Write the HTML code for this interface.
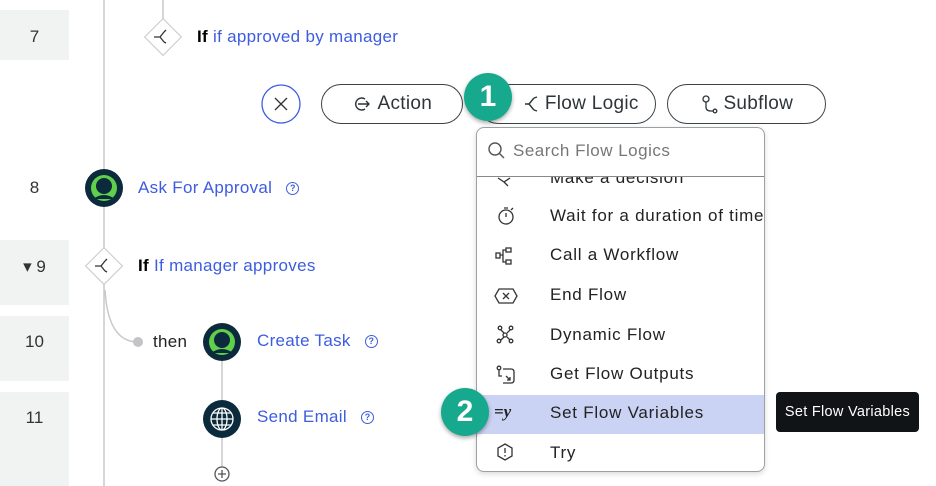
<!DOCTYPE html>
<html><head><style>
body{margin:0;width:936px;height:486px;overflow:hidden;background:#fff;font-family:"Liberation Sans",sans-serif;position:relative}
.a{position:absolute}
.num{position:absolute;left:0;width:69px;background:#f1f2f2;color:#333;font-size:17px;text-align:center}
.lk{color:#3d5ce0}
.t{position:absolute;font-size:17px;white-space:nowrap;letter-spacing:0.3px}
.pill{position:absolute;top:84px;border:1.5px solid #3a4245;border-radius:20px;font-size:19px;color:#2e3538;display:flex;align-items:center;justify-content:center;box-sizing:border-box;height:40px;letter-spacing:0.3px}
.it{position:absolute;left:550px;font-size:17px;color:#222;white-space:nowrap;letter-spacing:0.75px}
.ic{position:absolute;left:494px}
.badge{position:absolute;width:48px;height:48px;border-radius:50%;background:#17a98d;color:#fff;font-size:30px;font-weight:bold;text-align:center;line-height:48px;box-shadow:0 2px 4px rgba(0,0,0,.35)}
.help{display:inline-block;width:11px;height:11px;border:1.5px solid #3d5ce0;border-radius:50%;font-size:9px;line-height:11px;text-align:center;color:#3d5ce0;margin-left:14px;vertical-align:2px;font-weight:bold;letter-spacing:0}
</style></head><body>
<div class="num" style="top:10px;height:50px;line-height:54px">7</div>
<div class="a" style="left:0;top:163px;width:69px;line-height:50px;text-align:center;font-size:17px;color:#333">8</div>
<div class="num" style="top:240px;height:65px;line-height:54px">&#9662; 9</div>
<div class="num" style="top:316px;height:65px;line-height:52px">10</div>
<div class="num" style="top:392px;height:94px;line-height:52px">11</div>

<svg class="a" style="left:0;top:0" width="936" height="486">
<line x1="104" y1="0" x2="104" y2="486" stroke="#c9c9c9" stroke-width="1.5"/>
<line x1="163" y1="0" x2="163" y2="20" stroke="#c9c9c9" stroke-width="1.5"/>
<path d="M105 290 Q108 342 138 342" fill="none" stroke="#c9c9c9" stroke-width="1.5"/>
<circle cx="138" cy="342" r="5" fill="#c4c4c8"/>
<line x1="222" y1="342" x2="222" y2="470" stroke="#c9c9c9" stroke-width="1.5"/>
<rect x="150" y="24" width="26" height="26" transform="rotate(45 163 37)" fill="#fff" stroke="#c8c8c8"/>
<path d="M154 37h6l4-5M160 37l4 5M164 32l2-2M164 42l2 1" stroke="#333" fill="none" stroke-width="1.3"/>
<rect x="91" y="253" width="26" height="26" transform="rotate(45 104 266)" fill="#fff" stroke="#c8c8c8"/>
<path d="M95 266h6l4-5M101 266l4 5M105 261l2-2M105 271l2 1" stroke="#333" fill="none" stroke-width="1.3"/>
<circle cx="104" cy="188" r="19" fill="#0b2b3d"/><circle cx="104" cy="188" r="13" fill="#5fcf4c"/><circle cx="104" cy="186" r="8" fill="#0b2b3d"/><path d="M93 199 Q104 191 115 199" fill="#0b2b3d"/>
<circle cx="222" cy="342" r="19" fill="#0b2b3d"/><circle cx="222" cy="342" r="13" fill="#5fcf4c"/><circle cx="222" cy="340" r="8" fill="#0b2b3d"/><path d="M211 353 Q222 345 233 353" fill="#0b2b3d"/>
<circle cx="222" cy="419" r="19" fill="#0b2b3d"/>
<g stroke="#fff" fill="none" stroke-width="1.3"><circle cx="222" cy="419" r="11"/><ellipse cx="222" cy="419" rx="5" ry="11"/><line x1="211" y1="419" x2="233" y2="419"/><line x1="222" y1="408" x2="222" y2="430"/><line x1="213" y1="413" x2="231" y2="413"/><line x1="213" y1="425" x2="231" y2="425"/></g>
<circle cx="222" cy="474" r="7" fill="#fff" stroke="#555" stroke-width="1.3"/><path d="M218 474h8M222 470v8" stroke="#555" stroke-width="1.3"/>
<circle cx="281" cy="104" r="19" fill="#fff" stroke="#3d5ce0" stroke-width="1.3"/><path d="M275 98l12 12M287 98l-12 12" stroke="#333" stroke-width="1.3"/>
</svg>

<div class="t" style="left:197px;top:27px"><b>If</b> <span class="lk">if approved by manager</span></div>
<div class="t lk" style="left:138px;top:178px">Ask For Approval<span class="help">?</span></div>
<div class="t" style="left:138px;top:256px"><b>If</b> <span class="lk">If manager approves</span></div>
<div class="t" style="left:153px;top:332px;color:#222">then</div>
<div class="t lk" style="left:257px;top:331px">Create Task<span class="help">?</span></div>
<div class="t lk" style="left:257px;top:407px">Send Email<span class="help">?</span></div>

<div class="pill" style="left:321px;width:142px"><svg width="20" height="18"><path d="M13 4a6 6 0 1 0 0 10" fill="none" stroke="#2e3538" stroke-width="1.4"/><path d="M6 9h11M14 6l3 3-3 3" fill="none" stroke="#2e3538" stroke-width="1.4"/></svg>&nbsp;Action</div>
<div class="pill" style="left:478px;width:178px">&nbsp;&nbsp;&nbsp;&nbsp;&nbsp;<svg width="16" height="20"><path d="M2 10h4l5-6M6 10l5 6M11 4l3-1M11 16l3 1" fill="none" stroke="#2e3538" stroke-width="1.4"/></svg>&nbsp;Flow Logic</div>
<div class="pill" style="left:667px;width:159px"><svg width="18" height="20"><circle cx="6" cy="5" r="3" fill="none" stroke="#2e3538" stroke-width="1.3"/><path d="M6 8v5q0 4 5 4h2" fill="none" stroke="#2e3538" stroke-width="1.3"/><circle cx="15" cy="17" r="1.8" fill="none" stroke="#2e3538" stroke-width="1.3"/></svg>&nbsp;Subflow</div>

<div class="a" style="left:476px;top:127px;width:289px;height:345px;border:1px solid #9aa0a3;border-radius:8px;box-sizing:border-box;background:#fff;box-shadow:0 2px 6px rgba(0,0,0,.15);overflow:hidden">
 <div class="a" style="left:0;top:0;width:289px;height:48px;border-bottom:1.5px solid #888"></div>
 <svg class="a" style="left:10px;top:13px" width="20" height="20"><circle cx="8" cy="8" r="6" fill="none" stroke="#555" stroke-width="1.4"/><line x1="12.5" y1="12.5" x2="17" y2="17" stroke="#555" stroke-width="1.4"/></svg>
 <div class="a" style="left:36px;top:13px;font-size:17px;color:#777;letter-spacing:0.5px">Search Flow Logics</div>
 <div class="a" style="left:0;top:267px;width:289px;height:39px;background:#cbd3f5"></div>
</div>
<div class="it" style="top:168px;clip-path:inset(9px 0 0 0)">Make a decision</div>
<svg class="a" style="left:490px;top:170px" width="780" height="300" viewBox="490 170 780 300">
<g fill="none" stroke="#333" stroke-width="1.3">
<path d="M498 178l6 4 6-4M504 182l4 4"/>
<circle cx="506" cy="217" r="7"/><path d="M506 213v4M504 208h4M511 210l2-2"/>
<rect x="496" y="253" width="4" height="5"/><rect x="506" y="248" width="5" height="4"/><rect x="506" y="260" width="5" height="4"/><path d="M500 255h3v-5h3M503 255v7h3"/>
<path d="M499 289h14l4 7-4 7h-14l-4-7z"/><path d="M503 293l6 6M509 293l-6 6"/>
<circle cx="500" cy="328" r="1.8"/><circle cx="511" cy="328" r="1.8"/><circle cx="505" cy="335" r="2"/><circle cx="499" cy="341" r="1.8"/><circle cx="511" cy="341" r="1.8"/><path d="M501 330l3 3M510 330l-3 3M504 337l-3 3M507 337l3 3"/>
<circle cx="499" cy="368" r="1.8"/><path d="M499 370v6h3M503 369h8q3 0 3 3v8q0 3-3 3h-8"/><path d="M506 376l4 4M510 377v3h-3"/>
<path d="M505 444l7 4v8l-7 4-7-4v-8z"/><path d="M505 448v5M505 455v1.5"/>
</g></svg>
<div class="it" style="top:206px">Wait for a duration of time</div>
<div class="it" style="top:245px">Call a Workflow</div>
<div class="it" style="top:285px">End Flow</div>
<div class="it" style="top:325px">Dynamic Flow</div>
<div class="it" style="top:364px">Get Flow Outputs</div>
<div class="ic" style="top:402px;font-size:17px;font-weight:bold;font-style:italic;font-family:'Liberation Serif',serif;color:#222">=y</div>
<div class="it" style="top:403px">Set Flow Variables</div>
<div class="it" style="top:443px">Try</div>

<div class="a" style="left:776px;top:392px;width:143px;height:40px;background:#111416;border-radius:4px;color:#fff;font-size:14.5px;line-height:40px;text-align:center;letter-spacing:0.3px">Set Flow Variables</div>

<div class="badge" style="left:464px;top:73px">1</div>
<div class="badge" style="left:441px;top:388px">2</div>
</body></html>
